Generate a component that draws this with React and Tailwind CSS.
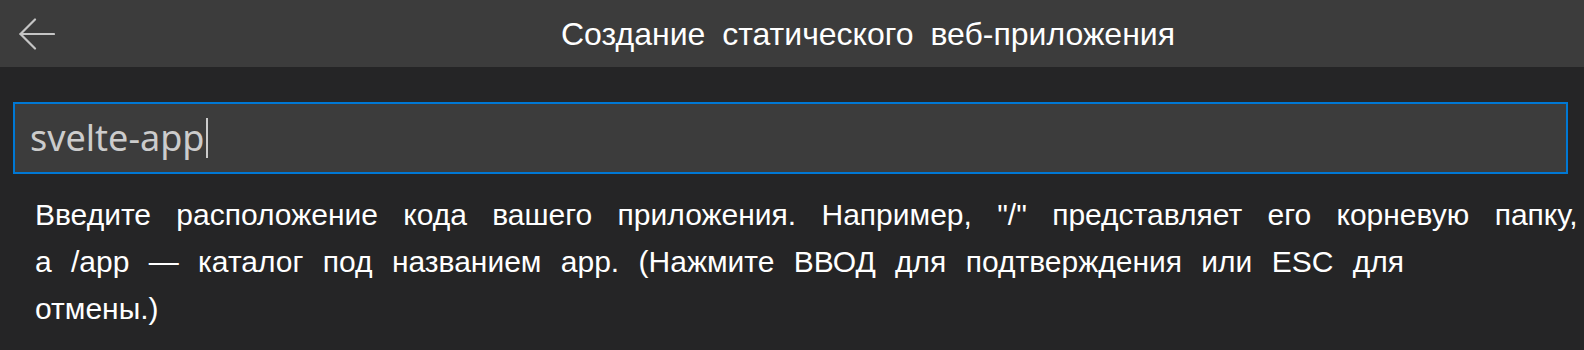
import React from 'react'

const BackArrow = () => (
  <svg width="36" height="32" viewBox="0 0 36 32" fill="none" stroke="#c5c5c5" strokeWidth="2.2" strokeLinecap="round" strokeLinejoin="round">
    <path d="M1.5 16 H35" />
    <path d="M16 1.5 L1.5 16 L16 30.5" />
  </svg>
)

const App = () => {
  return (
    <div className="w-full min-h-[350px] bg-[#252526] font-['Liberation_Sans',Arial,sans-serif] overflow-hidden">
      <div className="h-[67px] bg-[#3c3c3c] flex items-center">
        <div className="pl-[19px] w-[60px] flex items-center">
          <BackArrow />
        </div>
        <div className="flex-1 text-center pl-[92px] text-[32px] text-white [word-spacing:8px] leading-none">
          Создание статического веб-приложения
        </div>
      </div>

      <div className="pt-[35px] pl-[13px] pr-[16px]">
        <div className="h-[72px] border-2 border-[#0078d4] bg-[#3c3c3c] flex items-center pl-[15px]">
          <span className="font-['Noto_Sans',sans-serif] text-[36px] text-[#cccccc] leading-none">svelte-app</span>
          <span className="w-[2px] h-[40px] bg-[#cccccc] ml-[1px]" />
        </div>
      </div>

      <div className="pl-[35px] pt-[17px] text-[30px] text-white leading-[47px] whitespace-nowrap">
        <div className="[word-spacing:17px]">Введите расположение кода вашего приложения. Например, "/" представляет его корневую папку,</div>
        <div className="[word-spacing:11px]">а /app — каталог под названием app. (Нажмите ВВОД для подтверждения или ESC для</div>
        <div className="[word-spacing:11px]">отмены.)</div>
      </div>
    </div>
  )
}

export default App
